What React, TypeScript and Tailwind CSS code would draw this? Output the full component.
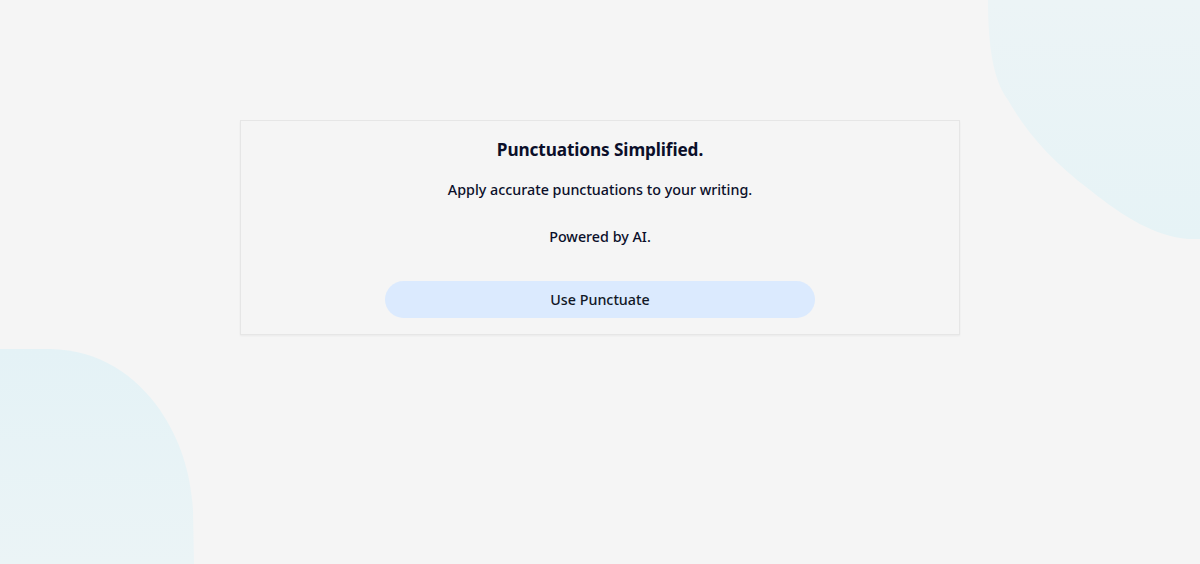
import React from "react";

export default function App() {
  return (
    <div
      className="relative w-full h-[564px] overflow-hidden bg-[#f5f5f5] text-[#0b0f2a]"
      style={{ fontFamily: '"Noto Sans", "Open Sans", sans-serif' }}
    >
      <svg className="absolute left-0 top-0 pointer-events-none" width="1200" height="564" viewBox="0 0 1200 564">
        <defs>
          <linearGradient id="g1" x1="0" y1="0" x2="0" y2="1">
            <stop offset="0" stopColor="#ecf4f6" />
            <stop offset="1" stopColor="#e6f3f6" />
          </linearGradient>
          <linearGradient id="g2" x1="0" y1="0" x2="0" y2="1">
            <stop offset="0" stopColor="#e4f2f6" />
            <stop offset="1" stopColor="#ebf4f6" />
          </linearGradient>
        </defs>
        <path
          d="M988 0 C988 45 993 80 1008 100 C1025 130 1050 160 1090 190 C1125 218 1155 236 1188 239 L1200 239 L1200 0 Z"
          fill="url(#g1)"
        />
        <path
          d="M0 349 L50 349 C100 350 135 375 160 410 C180 440 190 470 193 510 L194 564 L0 564 Z"
          fill="url(#g2)"
        />
      </svg>
      <div className="relative flex justify-center pt-[120px]">
        <div className="w-[720px] border border-[#e6e6e6] shadow-[0_1px_2px_rgba(0,0,0,0.05)] flex flex-col items-center pt-[16px] pb-[16px]">
          <h1 className="text-[17.2px] font-bold leading-[26px] tracking-[-0.1px]">Punctuations Simplified.</h1>
          <p className="mt-[16px] text-[14.3px] leading-[22px] font-medium">Apply accurate punctuations to your writing.</p>
          <p className="mt-[25px] text-[14.3px] leading-[22px] font-medium">Powered by AI.</p>
          <button className="mt-[33px] w-[430px] h-[37px] rounded-full bg-[#dbeafe] text-[14.3px] font-medium text-[#111827]">
            Use Punctuate
          </button>
        </div>
      </div>
    </div>
  );
}
